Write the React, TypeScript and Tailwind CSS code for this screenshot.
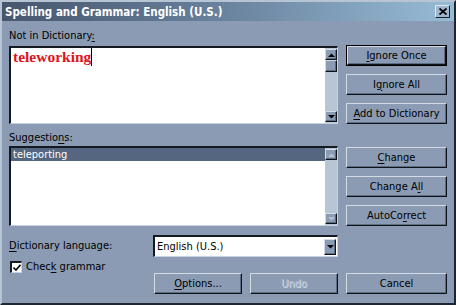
import React from "react";

// classic "Spelling and Grammar" dialog, slate theme
const UI = "font-['DejaVu_Sans_Condensed','DejaVu_Sans',sans-serif] text-[11px] leading-[14px] text-black";

const raised =
  "border border-t-[#d2dbe6] border-l-[#d2dbe6] border-r-[#0e131a] border-b-[#0e131a] shadow-[inset_-1px_-1px_0_#5c6c83] bg-[#8a9bb3]";
const sunken =
  "border-t-2 border-l-2 border-r border-b border-t-[#151a22] border-l-[#151a22] border-r-[#c9d3df] border-b-[#c9d3df]";

function Key({ children }: { children: React.ReactNode }) {
  return <span className="underline underline-offset-[2px] decoration-1">{children}</span>;
}

function Arrow({ dir, dim }: { dir: "up" | "down"; dim?: boolean }) {
  const pts = dir === "up" ? "0,4 3.5,0.5 7,4" : "0,0 7,0 3.5,3.5";
  return (
    <svg width="7" height="4" viewBox="0 0 7 4">
      <polygon points={pts} fill={dim ? "#b6c2d1" : "#000"} />
    </svg>
  );
}

function ScrollBtn({ dir, dim }: { dir: "up" | "down"; dim?: boolean }) {
  return (
    <div className={`w-[12px] h-[11px] flex items-center justify-center ${raised}`}>
      <Arrow dir={dir} dim={dim} />
    </div>
  );
}

function ScrollBar({ thumb, dim }: { thumb?: boolean; dim?: boolean }) {
  return (
    <div className="w-[12px] h-full bg-[#b8c5d5] flex flex-col py-[1px]">
      <ScrollBtn dir="up" dim={dim} />
      {thumb && <div className={`w-[12px] h-[12px] ${raised}`} />}
      <div className="flex-1" />
      <ScrollBtn dir="down" dim={dim} />
    </div>
  );
}

function Button({
  children,
  w = "w-[101px]",
  isDefault,
  disabled,
}: {
  children: React.ReactNode;
  w?: string;
  isDefault?: boolean;
  disabled?: boolean;
}) {
  return (
    <div className={`${w} h-[21px] shrink-0 ${isDefault ? "border border-black" : ""}`}>
      <div
        className={`w-full h-full flex items-center justify-center ${raised} ${
          disabled ? "text-[#aebacb] [text-shadow:1px_1px_0_#d3dbe5]" : ""
        }`}
      >
        {children}
      </div>
    </div>
  );
}

export default function App() {
  return (
    <div
      className={`${UI} w-[456px] h-[305px] bg-[#8a9bb3] border-2 border-t-[#b7c4d4] border-l-[#b7c4d4] border-r-[#1e2632] border-b-[#1e2632] flex flex-col`}
    >
      {/* title bar */}
      <div className="h-[19px] flex items-center justify-between pl-[3px] pr-[4px] bg-linear-to-r from-[#46566d] via-[#6a839f] to-[#98bcd6]">
        <span className="text-white font-bold text-[11.5px]">Spelling and Grammar: English (U.S.)</span>
        <div className="w-[15px] h-[13px] flex items-center justify-center border border-t-[#e0e8f0] border-l-[#e0e8f0] border-r-[#1a2230] border-b-[#1a2230] bg-[#9fb6cb]">
          <svg width="8" height="7" viewBox="0 0 8 7">
            <path d="M0.5 0.5 L7.5 6.5 M7.5 0.5 L0.5 6.5" stroke="#000" strokeWidth="1.8" />
          </svg>
        </div>
      </div>

      <div className="pl-[7px] pt-[8px] flex flex-col">
        {/* not in dictionary */}
        <div className="flex">
          <div className="w-[329px] flex flex-col">
            <div className="h-[17px]">
              Not in Dictionary<Key>:</Key>
            </div>
            <div className={`h-[78px] bg-white flex ${sunken}`}>
              <div className="flex-1 pl-[2px] flex items-start">
                <span className="font-['Liberation_Serif',serif] font-bold text-[15.5px] leading-[18px] text-[#e0141c]">
                  teleworking
                </span>
                <span className="w-[1px] h-[18px] bg-black" />
              </div>
              <ScrollBar thumb />
            </div>
          </div>
          <div className="ml-[8px] pt-[16px] flex flex-col gap-[8px]">
            <Button isDefault>
              <span>
                <Key>I</Key>gnore Once
              </span>
            </Button>
            <Button>
              <span>
                I<Key>g</Key>nore All
              </span>
            </Button>
            <Button>
              <span>
                <Key>A</Key>dd to Dictionary
              </span>
            </Button>
          </div>
        </div>

        {/* suggestions */}
        <div className="flex mt-[7px]">
          <div className="w-[329px] flex flex-col">
            <div className="h-[15px]">
              Suggestio<Key>n</Key>s:
            </div>
            <div className={`h-[80px] bg-white flex ${sunken}`}>
              <div className="flex-1">
                <div className="h-[13px] bg-[#546680] text-white pl-[2px] leading-[13px]">teleporting</div>
              </div>
              <ScrollBar dim />
            </div>
          </div>
          <div className="ml-[8px] pt-[16px] flex flex-col gap-[8px]">
            <Button>
              <span>
                <Key>C</Key>hange
              </span>
            </Button>
            <Button>
              <span>
                Change A<Key>l</Key>l
              </span>
            </Button>
            <Button>
              <span>
                AutoCo<Key>r</Key>rect
              </span>
            </Button>
          </div>
        </div>

        {/* dictionary language */}
        <div className="flex items-center mt-[9px] h-[22px]">
          <div className="w-[144px]">
            <Key>D</Key>ictionary language:
          </div>
          <div className={`w-[185px] h-[22px] bg-white flex items-center ${sunken}`}>
            <div className="flex-1 pl-[2px]">English (U.S.)</div>
            <div className={`w-[12px] h-[16px] mr-[1px] flex items-center justify-center ${raised}`}>
              <Arrow dir="down" />
            </div>
          </div>
        </div>

        {/* check grammar */}
        <div className="flex items-center mt-[4px] h-[12px] pl-[1px]">
          <div className={`w-[12px] h-[12px] bg-white flex items-center justify-center ${sunken}`}>
            <svg width="8" height="7" viewBox="0 0 8 7">
              <path d="M0.5 3.5 L3 6 L7.5 0.8" stroke="#000" strokeWidth="1.6" fill="none" />
            </svg>
          </div>
          <span className="ml-[4px]">
            Chec<Key>k</Key> grammar
          </span>
        </div>

        {/* bottom buttons */}
        <div className="flex pl-[145px] gap-[8px]">
          <Button w="w-[88px]">
            <span>
              <Key>O</Key>ptions...
            </span>
          </Button>
          <Button w="w-[88px]" disabled>
            Undo
          </Button>
          <Button>Cancel</Button>
        </div>
      </div>
    </div>
  );
}
